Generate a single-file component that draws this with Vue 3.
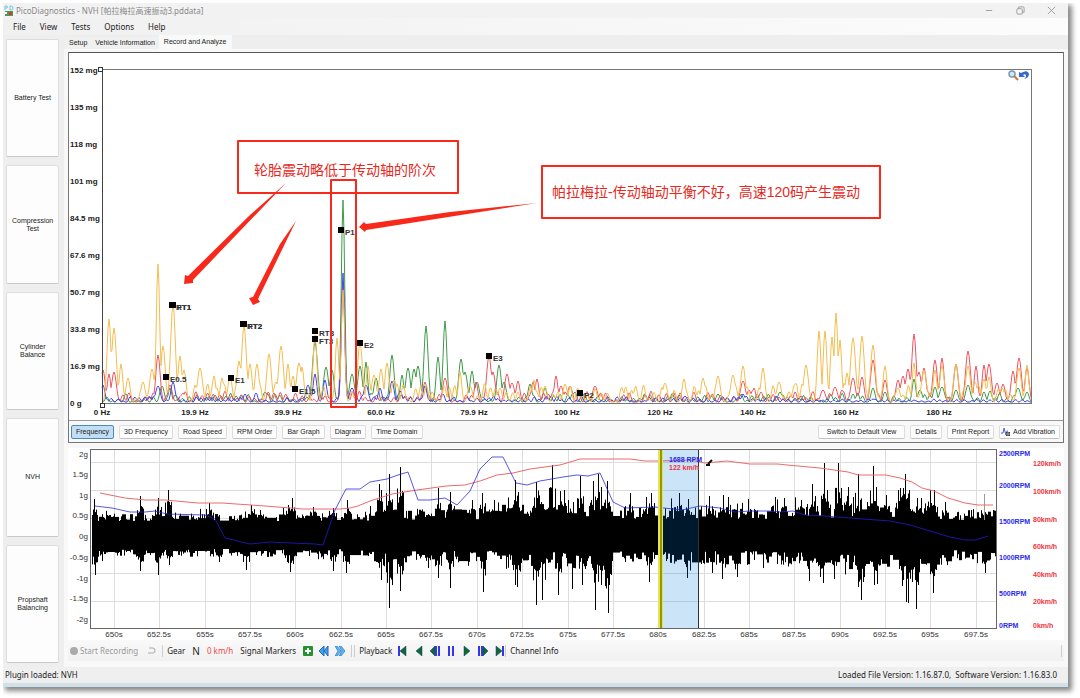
<script setup>
import { ref } from "vue";

const menus = ["File", "View", "Tests", "Options", "Help"];
const tests = ["Battery Test", "Compression Test", "Cylinder Balance", "NVH", "Propshaft Balancing"];
const tabs = ["Setup", "Vehicle Information", "Record and Analyze"];
const views = ["Frequency", "3D Frequency", "Road Speed", "RPM Order", "Bar Graph", "Diagram", "Time Domain"];
const activeTab = ref("Record and Analyze");
const activeView = ref("Frequency");

// small seeded generator so the traces are the same on every load
function random(seed) {
  let s = seed;
  return () => {
    s = (s * 16807) % 2147483647;
    return s / 2147483647;
  };
}

// ---- frequency chart ----
const left = 102;
const right = 1031;
const base = 403;

const orangePeaks = [
  [109, 319], [114, 328], [121, 364], [128, 378], [143, 382], [152, 369], [158, 264], [163, 346],
  [173, 304], [180, 356], [184, 370], [200, 368], [214, 376], [222, 378], [230, 376], [239, 361],
  [244, 326], [250, 364], [257, 364], [269, 354], [276, 382], [281, 346], [288, 364], [293, 376],
  [299, 363], [302, 367], [315, 335], [337, 338], [343, 290], [360, 343], [368, 366], [374, 375],
  [381, 369], [387, 363], [394, 380], [460, 372], [470, 386], [500, 388], [534, 380], [545, 386],
  [565, 384], [622, 389], [665, 383], [684, 379], [703, 378], [718, 376], [733, 375], [743, 366],
  [763, 368], [779, 382], [795, 384], [806, 365], [819, 331], [825, 331], [832, 337], [836, 313],
  [840, 340], [847, 373], [853, 338], [862, 336], [873, 345], [885, 366], [898, 388], [914, 363],
  [924, 370], [935, 370], [942, 366], [956, 364], [968, 366], [975, 382], [984, 379], [989, 377],
  [1002, 388], [1019, 368], [1027, 365],
];
const greenPeaks = [
  [162, 386], [170, 388], [265, 392], [315, 342], [326, 367], [332, 370], [343, 200], [352, 374],
  [360, 366], [366, 362], [376, 378], [392, 355], [402, 375], [408, 368], [414, 369], [418, 366],
  [426, 326], [438, 357], [445, 321], [461, 359], [465, 372], [472, 371], [477, 382], [499, 365],
  [504, 382], [530, 384], [545, 388], [575, 392], [718, 394], [780, 392], [853, 394], [873, 388],
  [885, 392], [914, 379], [920, 390], [935, 387], [942, 387], [956, 390], [968, 385], [984, 392],
  [990, 391], [1018, 388], [1027, 392],
];
const redPeaks = [
  [103, 370], [109, 374], [114, 372], [158, 355], [170, 385], [183, 393], [343, 283], [425, 382],
  [445, 378], [476, 382], [489, 356], [493, 372], [507, 374], [512, 383], [518, 381], [533, 382],
  [537, 379], [556, 376], [561, 386], [570, 386], [595, 386], [743, 381], [749, 390], [754, 388],
  [761, 392], [823, 390], [835, 387], [842, 390], [853, 378], [862, 377], [873, 360], [885, 380],
  [898, 380], [903, 376], [908, 369], [914, 334], [919, 372], [924, 368], [935, 360], [942, 358],
  [956, 364], [968, 351], [976, 366], [984, 365], [989, 364], [997, 383], [1003, 384], [1013, 371],
  [1019, 358], [1027, 368],
];
const bluePeaks = [
  [103, 385], [158, 386], [173, 382], [245, 394], [256, 393], [308, 385], [315, 374], [325, 380],
  [343, 273], [352, 388], [366, 385], [380, 388], [392, 381], [400, 391], [425, 386], [443, 394],
  [685, 396], [743, 394], [873, 399], [914, 400],
];

function spectrum(peaks, seed, noise) {
  const rnd = random(seed);
  const bumps = [];
  for (let x = left; x < right; x += 4 + rnd() * 4) {
    const n = x > 780 && seed === 31 ? 2 : noise;
    bumps.push([x, base - 2 - rnd() * n, 2]);
  }
  const all = [...bumps, ...peaks.map((p) => [p[0], p[1], p[1] < 300 ? 2 : 2 + rnd()])];
  const points = [];
  for (let x = left; x <= right; x++) {
    let h = 1;
    for (const [px, py, w] of all) {
      if (Math.abs(x - px) < 10) {
        h = Math.max(h, (base - py) * Math.exp(-Math.pow((x - px) / w, 2) * 0.7));
      }
    }
    points.push(x + " " + (base - h).toFixed(1));
  }
  return "M" + points.join("L");
}

const traces = [
  { color: "#3f9a49", d: spectrum(greenPeaks, 47, 8) },
  { color: "#ee5560", d: spectrum(redPeaks, 23, 10) },
  { color: "#4545e8", d: spectrum(bluePeaks, 31, 5) },
  { color: "#f5bd4f", d: spectrum(orangePeaks, 11, 18) },
];

const mgLabels = ["152 mg", "135 mg", "118 mg", "101 mg", "84.5 mg", "67.6 mg", "50.7 mg", "33.8 mg", "16.9 mg", "0 g"];
const hzLabels = ["0 Hz", "19.9 Hz", "39.9 Hz", "60.0 Hz", "79.9 Hz", "100 Hz", "120 Hz", "140 Hz", "160 Hz", "180 Hz"];

const markers = [
  { t: "RT1", x: 172, y: 305 }, { t: "FT1", x: 173, y: 305 },
  { t: "RT2", x: 243, y: 324 }, { t: "FT2", x: 244, y: 324 },
  { t: "RT3", x: 315, y: 331 }, { t: "FT3", x: 315, y: 339 },
  { t: "P1", x: 341, y: 230 }, { t: "E2", x: 360, y: 343 },
  { t: "E3", x: 489, y: 356 }, { t: "P2", x: 580, y: 393 },
  { t: "E0.5", x: 166, y: 377 }, { t: "E1", x: 231, y: 378 }, { t: "E1.5", x: 295, y: 389 },
];

// ---- time chart ----
const topSpikes = [
  [94, 499], [140, 496], [158, 498], [168, 490], [209, 503], [251, 505], [288, 505], [292, 498], [313, 507],
  [333, 508], [347, 500], [379, 484], [381, 490], [389, 474], [400, 467], [438, 488], [450, 492], [472, 500], [482, 493],
  [494, 500], [515, 480], [518, 492], [536, 482], [541, 502], [552, 465], [564, 490], [568, 500], [580, 476], [593, 481],
  [598, 474], [601, 487], [607, 481], [630, 493], [646, 497], [651, 493], [679, 493], [688, 499], [709, 496],
  [723, 495], [748, 499], [775, 497], [784, 498], [801, 500], [812, 484], [815, 496], [824, 463],
  [827, 490], [838, 463], [841, 488], [848, 487], [858, 474], [867, 502], [873, 466], [876, 487], [886, 495],
  [898, 490], [900, 488], [903, 488], [905, 474], [909, 490], [917, 498], [921, 498], [930, 490], [934, 490], [945, 502], [984, 507],
];
const bottomSpikes = [
  [95, 575], [140, 571], [158, 575], [169, 565], [219, 562], [246, 570], [290, 572], [293, 564], [333, 571], [346, 573],
  [381, 580], [389, 608], [400, 591], [428, 568], [438, 578], [450, 588], [483, 592], [515, 585], [517, 587],
  [536, 605], [542, 600], [558, 595], [572, 589], [582, 585], [595, 610], [601, 585], [608, 613], [649, 582],
  [687, 578], [722, 579], [737, 577], [809, 581], [820, 577], [823, 583], [834, 579], [858, 587], [861, 600], [863, 582],
  [874, 585], [877, 584], [902, 586], [906, 602], [908, 603], [912, 582], [916, 609], [918, 585], [933, 593], [936, 570], [985, 573],
];

function strength(x) {
  if (x < 370) return 1;
  if (x < 500) return 1.5;
  if (x < 620) return 2;
  if (x < 800) return 1.7;
  if (x < 940) return 2.1;
  return 1.4;
}

function waveform() {
  const rnd = random(77);
  let d = "";
  let crest = 0;
  let trough = 0;
  for (let x = 92; x < 997; x++) {
    const k = strength(x);
    // a crest holds for a couple of pixels, which keeps the band dense
    if (rnd() > 0.55) crest = rnd();
    if (rnd() > 0.55) trough = rnd();
    let top = 524 - k * (3 + crest * 7);
    let bottom = 546 + k * (3 + trough * 8);
    if (rnd() > 0.9) top -= 7 * k * rnd();
    if (rnd() > 0.9) bottom += 7 * k * rnd();
    for (const [sx, sy] of topSpikes) {
      if (sx === x) top = sy;
      else if (Math.abs(sx - x) < 4) top = Math.min(top, 518 - (518 - sy) * (0.15 + 0.45 * rnd()));
    }
    for (const [sx, sy] of bottomSpikes) {
      if (sx === x) bottom = sy;
      else if (Math.abs(sx - x) < 4) bottom = Math.max(bottom, 552 + (sy - 552) * (0.15 + 0.45 * rnd()));
    }
    d += `M${x}.5 ${top.toFixed(1)}V${bottom.toFixed(1)}`;
  }
  return d;
}
const wave = waveform();

const speedLine =
  "100,493 115,496 125,498 145,500 165,500 198,503 222,503 265,506 303,509 340,509 350,508 358,506 370,501 392,494 417,490 446,486 465,485 480,481 497,475 513,473 530,469 560,465 580,459 630,459 645,461 660,461 690,460 705,463 727,461 750,464 778,464 787,465 820,468 848,472 858,475 886,475 900,478 912,482 922,488 934,491 948,498 965,503 978,505 993,505";
const rpmLine =
  "95,506 112,508 130,512 145,512 155,511 167,514 205,515 215,519 225,538 250,544 270,542 315,544 323,545 335,510 346,489 360,489 370,482 387,479 398,475 408,472 418,500 430,500 445,498 457,505 470,491 480,469 492,457 503,457 516,483 527,485 540,481 563,477 577,475 588,476 600,473 613,502 625,508 655,507 682,510 700,506 720,508 735,512 750,511 770,511 780,512 793,511 805,515 825,516 850,518 890,521 910,525 930,531 950,537 965,540 976,540 988,536";

const gLabels = [["2g", 454], ["1.5g", 474], ["1g", 495], ["0.5g", 515], ["0g", 536], ["-0.5g", 557], ["-1g", 578], ["-1.5g", 598], ["-2g", 619]];
const rpmLabels = [["2500RPM", 453], ["2000RPM", 485], ["1500RPM", 521], ["1000RPM", 557], ["500RPM", 593], ["0RPM", 625]];
const kmhLabels = [["120km/h", 463], ["100km/h", 491], ["80km/h", 519], ["60km/h", 546], ["40km/h", 574], ["20km/h", 601], ["0km/h", 625]];
const times = [];
for (let i = 0; i < 20; i++) {
  times.push({ t: 650 + i * 2.5 + "s", x: Math.round(114 + i * 45.35) });
}

// ---- playback buttons, blue bars and green arrows on a 10 x 10 grid ----
const playback = [
  { name: "To start", bars: [0], arrow: "M8 0V10L2 5Z" },
  { name: "Play backwards", bars: [], arrow: "M8 0V10L2 5Z" },
  { name: "Step back", bars: [5, 8], arrow: "M5 0V10L0 5Z" },
  { name: "Pause", bars: [2, 6], arrow: "" },
  { name: "Play", bars: [], arrow: "M2 0V10L8 5Z" },
  { name: "Step forward", bars: [0, 3], arrow: "M5 0V10L10 5Z" },
  { name: "To end", bars: [8], arrow: "M2 0V10L8 5Z" },
];
</script>

<template>
  <div class="window">
    <header class="title">
      <svg class="logo" viewBox="0 0 10 11">
        <path d="M1 5V1H3Q4 2 3 3H1M6 1V5H7Q9 5 9 3Q9 1 7 1Z" fill="none" stroke="#7cc4e8" />
        <rect x="1" y="6" width="8" height="5" fill="#4a9c5c" />
        <rect x="1" y="7" width="2" height="2" fill="#fff" />
        <rect x="5" y="7" width="3" height="3" fill="#d8382c" />
      </svg>
      <span>PicoDiagnostics - NVH [帕拉梅拉高速振动3.pddata]</span>
      <div class="caption">
        <button aria-label="Minimize"><svg viewBox="0 0 10 10"><path d="M1 5H8" /></svg></button>
        <button aria-label="Restore">
          <svg viewBox="0 0 10 10"><rect x="1" y="3" width="6" height="6" rx="1" /><path d="M3 3V1H8Q9 1 9 2V7H7" /></svg>
        </button>
        <button aria-label="Close"><svg viewBox="0 0 10 10"><path d="M1 1L9 9M9 1L1 9" /></svg></button>
      </div>
    </header>

    <nav class="menu">
      <button v-for="m in menus" :key="m">{{ m }}</button>
    </nav>

    <div class="content">
      <aside class="tests">
        <button v-for="t in tests" :key="t"><span>{{ t }}</span></button>
      </aside>

      <main>
        <div class="tabs" role="tablist">
          <button
            v-for="t in tabs"
            :key="t"
            role="tab"
            :aria-selected="t === activeTab"
            :class="{ active: t === activeTab }"
            @click="activeTab = t"
          >{{ t }}</button>
        </div>

        <div class="page">
          <section class="frequency">
            <svg class="chart" viewBox="69 53 994 367">
              <g class="axis">
                <text v-for="(l, i) in mgLabels" :key="l" x="70" :y="73 + i * 37">{{ l }}</text>
                <text v-for="(l, i) in hzLabels" :key="l" :x="102 + i * 93" y="415" text-anchor="middle">{{ l }}</text>
              </g>
              <path v-for="t in traces" :key="t.color" :d="t.d" :stroke="t.color" class="trace" />
              <rect x="102.5" y="69.5" width="929" height="334" fill="none" stroke="#777" />
              <path d="M102.5 70V403.5" stroke="#444" />
              <rect x="98.5" y="67.5" width="4" height="4" fill="#fff" stroke="#333" />
              <rect x="100.5" y="403.5" width="4" height="4" fill="#fff" stroke="#333" />

              <g v-for="m in markers" :key="m.t" class="marker">
                <rect :x="m.x - 3" :y="m.y - 3" width="6" height="6" />
                <text :x="m.x + 4" :y="m.y + 5">{{ m.t }}</text>
              </g>

              <g class="magnifier">
                <circle cx="1012" cy="74" r="3" fill="#d6e8f6" stroke="#7a98b8" stroke-width="1.5" />
                <path d="M1014 76L1018 80" stroke="#c87848" stroke-width="2" />
              </g>
              <path d="M1019 72V77H1025L1023 75Q1026 73 1026 76Q1026 78 1024 79Q1029 78 1029 74Q1028 69 1021 73Z" fill="#3569cf" />

              <g class="notes">
                <rect x="238" y="141" width="220" height="52" />
                <rect x="331" y="180" width="25" height="227" />
                <rect x="542" y="166" width="338" height="52" />
                <path d="M286 183L193 280L193 283L184 284L185 275L188 276L250 215Z" />
                <path d="M296 221L258 299L260 302L253 305L249 298L253 297L280 244Z" />
                <path d="M537 203L366 230L365 232L359 227L364 222L366 224L450 212Z" />
                <text x="254" y="175">轮胎震动略低于传动轴的阶次</text>
                <text x="552" y="197">帕拉梅拉-传动轴动平衡不好，高速120码产生震动</text>
              </g>
            </svg>

            <div class="views">
              <button
                v-for="v in views"
                :key="v"
                :class="{ active: v === activeView }"
                @click="activeView = v"
              >{{ v }}</button>
              <span class="space"></span>
              <button class="wide">Switch to Default View</button>
              <button>Details</button>
              <button>Print Report</button>
              <button class="add">
                <svg viewBox="0 0 10 10">
                  <path d="M0 6H2L3 1L5 8L6 4H7" fill="none" stroke="#4a63d8" />
                  <path d="M5 5H9V9H5Z" fill="#333" />
                  <path d="M7 5V9M5 7H9" stroke="#aaa" />
                </svg>
                Add Vibration
              </button>
            </div>
          </section>

          <svg class="chart time" viewBox="68 448 996 192">
            <rect x="91" y="449" width="906" height="180" fill="#fff" />
            <path
              v-for="t in times"
              :key="t.t"
              :d="`M${t.x}.5 450V629`"
              class="grid"
            />
            <path d="M91 462.5H997M91 490.5H997M91 518.5H997M91 546.5H997M91 573.5H997M91 601.5H997" class="grid" />
            <path :d="wave" stroke="#000" stroke-width="1" />
            <path d="M984.5 494V520" stroke="#999" />
            <polyline :points="speedLine" fill="none" stroke="#ee6a6a" />
            <polyline :points="rpmLine" fill="none" stroke="#2020d8" stroke-opacity="0.75" />
            <rect x="662" y="450" width="36" height="179" fill="#0078d7" fill-opacity="0.2" />
            <path d="M698.5 450V629" stroke="#333" />
            <rect x="658" y="450" width="5" height="179" fill="#e4e45a" />
            <rect x="660" y="450" width="2" height="179" fill="#969600" />
            <rect x="90.5" y="449.5" width="906" height="179" fill="none" stroke="#666" />
            <path d="M706 465H710M708 464L712 460" fill="none" stroke="#111" stroke-width="2" />

            <g class="scale">
              <text v-for="[l, y] in gLabels" :key="l" x="88" :y="y + 3" text-anchor="end">{{ l }}</text>
              <text v-for="t in times" :key="t.t" :x="t.x" y="637" text-anchor="middle">{{ t.t }}</text>
            </g>
            <g class="scale rpm">
              <text v-for="[l, y] in rpmLabels" :key="l" x="999" :y="y + 3">{{ l }}</text>
              <text x="669" y="462">1688 RPM</text>
            </g>
            <g class="scale kmh">
              <text v-for="[l, y] in kmhLabels" :key="l" x="1033" :y="y + 3">{{ l }}</text>
              <text x="669" y="470">122 km/h</text>
            </g>
          </svg>

          <div class="toolbar">
            <button class="record" disabled><i></i>Start Recording</button>
            <button class="loop" disabled aria-label="Repeat">
              <svg viewBox="0 0 8 8"><path d="M1 1H5Q7 1 7 4Q7 6 5 6H0" fill="none" stroke="#aaa" /></svg>
            </button>
            <span class="line"></span>
            <span>Gear</span>
            <span class="gear">N</span>
            <span class="speed">0 km/h</span>
            <span class="signal">Signal Markers</span>
            <button aria-label="Add marker">
              <svg viewBox="0 0 10 10">
                <rect width="10" height="10" rx="1" fill="#25922d" />
                <path d="M5 2V8M2 5H8" stroke="#fff" stroke-width="2" />
              </svg>
            </button>
            <button aria-label="Previous marker">
              <svg viewBox="0 0 10 10"><path d="M5 0V10L0 5ZM9 0V10L5 5Z" fill="#3da3ee" stroke="#2265b8" /></svg>
            </button>
            <button aria-label="Next marker">
              <svg viewBox="0 0 10 10">
                <path d="M0 0H2L6 5L2 10H0L3 5ZM4 0H6L10 5L6 10H4L7 5Z" fill="#62b7ef" stroke="#2876c8" stroke-width="0.7" />
              </svg>
            </button>
            <span class="line double"></span>
            <span>Playback</span>
            <div class="playback">
              <button v-for="p in playback" :key="p.name" :aria-label="p.name">
                <svg viewBox="0 0 11 10">
                  <path :d="p.arrow" fill="#0b6b2c" stroke="#153e78" stroke-width="0.5" />
                  <rect v-for="b in p.bars" :key="b" :x="b" y="0" width="2" height="10" fill="#3535ee" />
                </svg>
              </button>
            </div>
            <span class="line"></span>
            <span>Channel Info</span>
            <span class="line end"></span>
          </div>
        </div>
      </main>
    </div>

    <footer>
      <span>Plugin loaded: NVH</span>
      <span>Loaded File Version: 1.16.87.0,&nbsp; Software Version: 1.16.83.0</span>
    </footer>
  </div>
</template>

<style>
body {
  margin: 0;
  background: #fff;
}
#app {
  padding: 3px 12px 12px 3px;
}
</style>

<style scoped>
.window {
  display: flex;
  flex-direction: column;
  background: #f0f0f0;
  border-bottom: 4px solid #cfe2ea;
  box-shadow: 3px 3px 5px 1px #888;
  clip-path: inset(0 -12px -12px 0);
  color: #222;
  font-family: "Noto Sans", "Noto Sans CJK SC", sans-serif;
  font-size: 8px;
  line-height: 10px;
}
button {
  margin: 0;
  padding: 0;
  border: 0;
  background: none;
  color: inherit;
  font: inherit;
}
.title {
  display: flex;
  align-items: center;
  height: 15px;
  background: #f2f2f2;
  color: #888;
}
.logo {
  width: 10px;
  height: 11px;
  margin: 0 2px 0 1px;
}
.caption {
  display: flex;
  gap: 22px;
  margin-left: auto;
  margin-right: 12px;
}
.caption button {
  display: flex;
}
.caption svg {
  width: 9px;
  height: 9px;
  fill: none;
  stroke: #999;
}
.menu {
  display: flex;
  align-items: center;
  gap: 14px;
  height: 17px;
  padding-left: 10px;
  background: linear-gradient(90deg, #f0f0f0, #fcfcfc);
}
.content {
  display: flex;
  background: #eee;
}
.tests {
  display: grid;
  grid-auto-rows: 1fr;
  gap: 8px;
  box-sizing: border-box;
  width: 61px;
  flex: none;
  padding: 4px 6px 4px 3px;
  font-family: "Liberation Sans", Arial, sans-serif;
  font-size: 7px;
  line-height: 8px;
}
.tests button {
  padding: 0 5px;
  border: 1px solid #ddd;
  border-bottom-color: #c8c8c8;
  border-radius: 2px;
  background: #fdfdfd;
}
main {
  flex: 1;
  min-width: 0;
}
.tabs {
  display: flex;
  align-items: flex-end;
  height: 14px;
  padding-left: 1px;
  font-family: "Liberation Sans", Arial, sans-serif;
  font-size: 7px;
  line-height: 8px;
}
.tabs button {
  height: 12px;
  padding: 0 4px;
  background: #f0f0f0;
}
.tabs .active {
  height: 14px;
  padding: 0 5px 1px;
  background: #f9f9f9;
}
.page {
  padding: 3px 4px 6px;
  background: #f8f8f8;
}
.frequency {
  border: 1px solid #777;
  border-top-color: #555;
}
.chart {
  display: block;
  width: 100%;
  background: #fff;
  font-family: "Liberation Sans", Arial, sans-serif;
}
.axis {
  font-size: 8px;
  font-weight: bold;
  fill: #222;
}
.trace {
  fill: none;
  stroke-width: 1;
}
.marker text {
  font-size: 8px;
  font-weight: bold;
  fill: #333;
}
.notes rect,
.notes path {
  fill: none;
  stroke: #f8281a;
  stroke-width: 2;
  stroke-linejoin: round;
}
.notes path {
  fill: #f8281a;
  stroke: none;
}
.notes text {
  fill: #e8281c;
  font-family: "Liberation Sans", "Noto Sans CJK SC", sans-serif;
  font-size: 14px;
}
.views {
  display: flex;
  align-items: center;
  gap: 5px;
  height: 21px;
  padding: 0 3px 0 2px;
  border-top: 1px solid #999;
  font-family: "Liberation Sans", Arial, sans-serif;
  font-size: 7px;
}
.views button {
  height: 14px;
  padding: 0 4px;
  border: 1px solid #ddd;
  border-bottom-color: #c4c4c4;
  border-radius: 2px;
  background: #fdfdfd;
}
.views .active {
  border-color: #4c8cbc;
  background: #c2def4;
}
.views .wide {
  padding: 0 8px;
}
.views .add {
  display: flex;
  align-items: center;
  gap: 2px;
  padding: 0 4px 0 1px;
}
.views .add svg {
  width: 10px;
  height: 10px;
}
.space {
  flex: 1;
}
.time {
  margin-top: 5px;
}
.grid {
  stroke: #ddd;
  fill: none;
}
.scale {
  font-size: 8px;
  fill: #333;
}
.rpm,
.kmh {
  font-size: 7px;
  font-weight: bold;
  fill: #2a2aee;
}
.kmh {
  fill: #ee3340;
}
.toolbar {
  display: flex;
  align-items: center;
  height: 21px;
  padding-left: 2px;
  background: linear-gradient(#f9f9f9, #f1f1f1);
}
.toolbar button {
  display: flex;
  align-items: center;
  margin-right: 6px;
}
.toolbar svg {
  width: 10px;
  height: 10px;
}
.toolbar .record {
  gap: 2px;
  margin-right: 10px;
  color: #999;
}
.record i {
  width: 8px;
  height: 8px;
  border-radius: 50%;
  background: #aaa;
}
.toolbar .loop svg {
  width: 8px;
  height: 8px;
}
.line {
  width: 1px;
  height: 12px;
  margin-right: 4px;
  background: #ccc;
}
.double {
  width: 2px;
  margin-left: 0;
  border: solid #ccc;
  border-width: 0 1px;
  background: none;
}
.end {
  margin-left: auto;
  margin-right: 2px;
}
.gear {
  margin: 0 7px;
  font-size: 10px;
}
.speed {
  color: #ee4848;
}
.signal {
  margin: 0 7px;
}
.playback {
  display: flex;
  gap: 5px;
  margin-left: 6px;
}
.playback button {
  margin: 0;
}
.playback svg {
  width: 11px;
}
footer {
  display: flex;
  align-items: center;
  justify-content: space-between;
  height: 16px;
  padding: 0 11px 0 2px;
  background: #efefef;
}
</style>
